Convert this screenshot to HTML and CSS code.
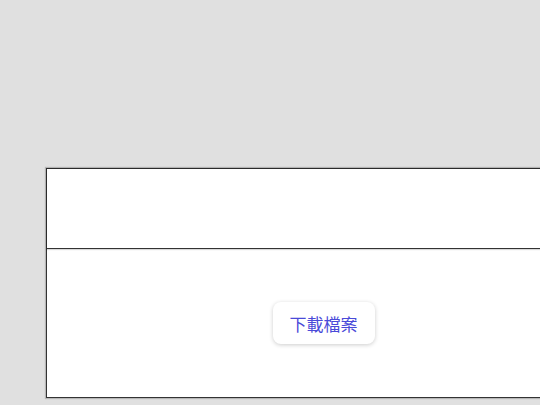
FILE: index.html
```html
<!DOCTYPE html>
<html lang="zh-Hant">
<head>
<meta charset="utf-8">
<link rel="stylesheet" href="styles.css">
</head>
<body>
<div class="frame">
  <div class="panel">
    <div class="panel-top"></div>
    <div class="panel-body">
      <button class="download">下載檔案</button>
    </div>
  </div>
</div>
</body>
</html>
```
FILE: styles.css
```css
html, body {
  margin: 0;
  padding: 0;
  background: #e0e0e0;
  overflow: hidden;
  width: 540px;
  height: 405px;
}
.frame {
  padding: 168px 0 0 46px;
}
.panel {
  width: 553px;
  background: #ffffff;
  border: 1px solid #333333;
  box-shadow: 0 0 1px 1px rgba(0,0,0,0.18);
  display: flex;
  flex-direction: column;
}
.panel-top {
  height: 79px;
  border-bottom: 1px solid #333333;
  box-shadow: 0 0 1px 1px rgba(0,0,0,0.15);
}
.panel-body {
  height: 148px;
  display: flex;
  align-items: center;
  justify-content: center;
}
.download {
  font-family: "Noto Sans CJK TC", "Noto Sans", sans-serif;
  font-size: 17px;
  font-weight: 400;
  color: #4a4ad8;
  background: #ffffff;
  border: none;
  border-radius: 8px;
  padding: 0 17px;
  height: 42px;
  box-shadow: 0 1px 4px rgba(0,0,0,0.2);
}
```
